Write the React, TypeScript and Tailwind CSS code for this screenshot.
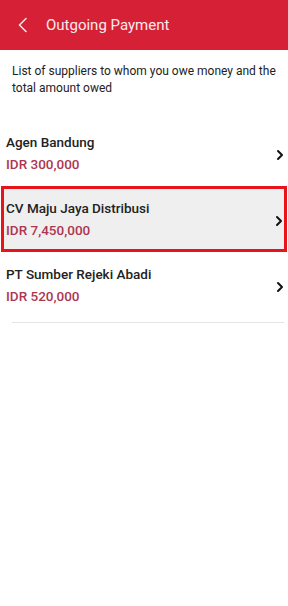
import React from 'react';

const suppliers = [
  { name: 'Agen Bandung', amount: 'IDR 300,000' },
  { name: 'CV Maju Jaya Distribusi', amount: 'IDR 7,450,000', active: true },
  { name: 'PT Sumber Rejeki Abadi', amount: 'IDR 520,000' },
];

const Chevron = () => (
  <svg className="mt-[3px]" width="8" height="12" viewBox="0 0 8 12" fill="none">
    <path d="M2 2l4 4-4 4" stroke="#111" strokeWidth="2" strokeLinecap="round" strokeLinejoin="round" />
  </svg>
);

export default function App() {
  return (
    <div className="w-[288px] h-[606px] bg-white font-['Roboto',sans-serif]">
      {/* Header */}
      <div className="h-[50px] bg-[#d62036] flex items-center">
        <svg className="ml-[17px]" width="12" height="16" viewBox="0 0 12 16" fill="none">
          <path d="M9 1.5L2.5 8 9 14.5" stroke="#f8e6e8" strokeWidth="1.6" strokeLinecap="round" strokeLinejoin="round" />
        </svg>
        <span className="ml-[17px] text-[15px] text-[#fbeaec]">Outgoing Payment</span>
      </div>

      {/* Description */}
      <p className="px-3 pt-[13px] text-[12px] leading-[17px] text-[#222]">
        List of suppliers to whom you owe money and the total amount owed
      </p>

      {/* Supplier list */}
      <div className="mt-[23px]">
        {suppliers.map((s) => (
          <div
            key={s.name}
            className={`h-[66px] flex items-center justify-between pl-[6px] pr-[4px] ${
              s.active ? 'bg-[#efefef] border-[3px] border-[#e8141c] mx-[1px] !pl-[2px] !pr-[1px]' : ''
            }`}
          >
            <div className="flex flex-col pt-[1px]">
              <span className="text-[13.5px] leading-[19px] font-medium text-[#222]">{s.name}</span>
              <span className="mt-[3px] text-[13.5px] leading-[19px] font-medium text-[#ad3650]">{s.amount}</span>
            </div>
            <Chevron />
          </div>
        ))}
        <div className="mt-[4px] ml-3 mr-[4px] border-t border-[#e4e4e4]" />
      </div>
    </div>
  );
}
